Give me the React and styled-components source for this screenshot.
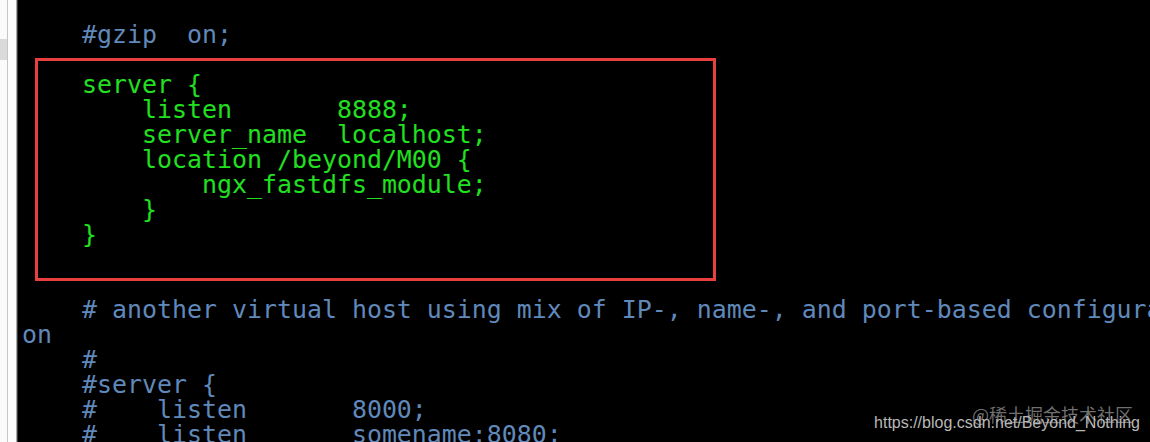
import React from "react";
import styled, { createGlobalStyle } from "styled-components";

const Global = createGlobalStyle`
  html, body { margin: 0; padding: 0; height: 100%; overflow: hidden; background: #000; }
  #root { height: 100%; }
`;

const Page = styled.div`
  display: flex;
  width: 1150px;
  height: 442px;
  overflow: hidden;
`;

const Gutter = styled.div`
  display: flex;
  flex: 0 0 18px;
  height: 100%;
  background: #fbfbfb;
`;

const GutterPane = styled.div`
  display: flex;
  flex-direction: column;
  width: 7px;
  padding-top: 39px;
`;

const GutterTab = styled.div`
  height: 21px;
  background: #dadada;
`;

const GutterLine = styled.div`
  width: 1px;
  background: ${(p) => p.$color};
`;

const GutterGap = styled.div`
  width: ${(p) => p.$w}px;
  background: #fdfdfd;
`;

const Terminal = styled.div`
  position: relative;
  flex: 1;
  background: #000;
  padding: 22px 0 0 4px;
  overflow: hidden;
  font-family: "DejaVu Sans Mono", "Liberation Mono", monospace;
  font-size: 24.92px;
`;

const Line = styled.div`
  height: 25px;
  line-height: 25px;
  white-space: pre;
  color: ${(p) => (p.$tone === "green" ? "#20e020" : "#6089bb")};
`;

const Highlight = styled.div`
  position: absolute;
  left: 17px;
  top: 58px;
  width: 681px;
  height: 223px;
  box-sizing: border-box;
  border: 3px solid #e8403f;
`;

const Watermark = styled.div`
  position: absolute;
  right: 10px;
  bottom: 10px;
  display: flex;
  flex-direction: column;
  align-items: flex-end;
`;

const WatermarkBrand = styled.span`
  font-family: "Noto Sans CJK SC", "Liberation Sans", sans-serif;
  font-size: 18px;
  line-height: 18px;
  color: rgba(150, 150, 150, 0.75);
  margin-right: 7px;
  margin-bottom: -9px;
`;

const WatermarkUrl = styled.span`
  font-family: "Liberation Sans", Arial, sans-serif;
  font-size: 16px;
  line-height: 18px;
  color: #b8b8b8;
`;

const lines = [
  ["blue", "    #gzip  on;"],
  ["blue", ""],
  ["green", "    server {"],
  ["green", "        listen       8888;"],
  ["green", "        server_name  localhost;"],
  ["green", "        location /beyond/M00 {"],
  ["green", "            ngx_fastdfs_module;"],
  ["green", "        }"],
  ["green", "    }"],
  ["blue", ""],
  ["blue", ""],
  ["blue", "    # another virtual host using mix of IP-, name-, and port-based configurati"],
  ["blue", "on"],
  ["blue", "    #"],
  ["blue", "    #server {"],
  ["blue", "    #    listen       8000;"],
  ["blue", "    #    listen       somename:8080;"],
];

export default function App() {
  return (
    <>
      <Global />
      <Page>
        <Gutter>
          <GutterPane>
            <GutterTab />
          </GutterPane>
          <GutterLine $color="#c6c6c6" />
          <GutterGap $w={8} />
          <GutterLine $color="#a8a8a8" />
          <GutterLine $color="#3a3a3a" />
        </Gutter>
        <Terminal>
          {lines.map(([tone, text], i) => (
            <Line key={i} $tone={tone}>
              {text}
            </Line>
          ))}
          <Highlight />
          <Watermark>
            <WatermarkBrand>@稀土掘金技术社区</WatermarkBrand>
            <WatermarkUrl>https://blog.csdn.net/Beyond_Nothing</WatermarkUrl>
          </Watermark>
        </Terminal>
      </Page>
    </>
  );
}
